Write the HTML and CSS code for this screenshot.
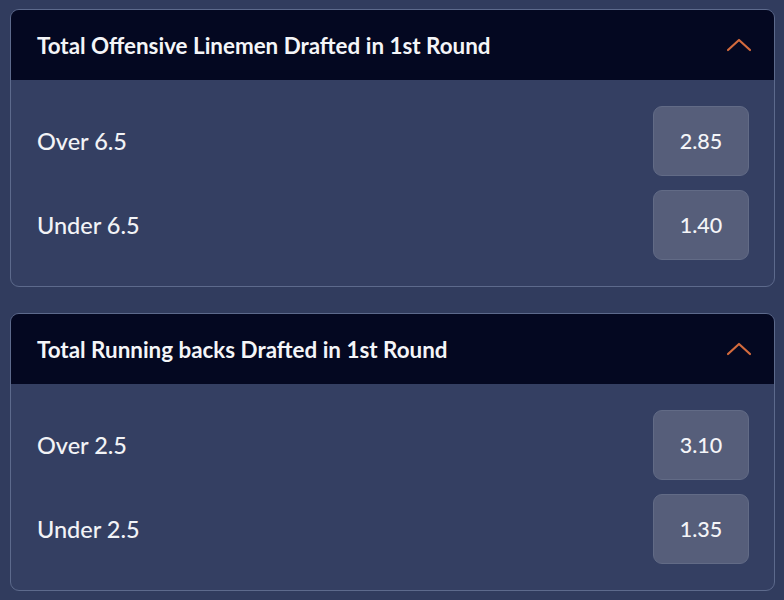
FILE: index.html
```html
<!DOCTYPE html>
<html lang="en">
  <head>
    <meta charset="UTF-8" />
    <title>Draft Props</title>
    <link rel="stylesheet" href="styles.css">
  </head>
  <body>
    <div class="market">
      <div class="market-header">
        <h2>Total Offensive Linemen Drafted in 1st Round</h2>
        <svg class="chevron" width="26" height="16" viewBox="0 0 26 16">
          <path d="M2 13 L13 3 L24 13" />
        </svg>
      </div>
      <div class="market-body">
        <div class="outcome">
          <span class="outcome-name">Over 6.5</span>
          <button class="odds">2.85</button>
        </div>
        <div class="outcome">
          <span class="outcome-name">Under 6.5</span>
          <button class="odds">1.40</button>
        </div>
      </div>
    </div>

    <div class="market">
      <div class="market-header">
        <h2>Total Running backs Drafted in 1st Round</h2>
        <svg class="chevron" width="26" height="16" viewBox="0 0 26 16">
          <path d="M2 13 L13 3 L24 13" />
        </svg>
      </div>
      <div class="market-body">
        <div class="outcome">
          <span class="outcome-name">Over 2.5</span>
          <button class="odds">3.10</button>
        </div>
        <div class="outcome">
          <span class="outcome-name">Under 2.5</span>
          <button class="odds">1.35</button>
        </div>
      </div>
    </div>
  </body>
</html>
```

FILE: styles.css
```css
body {
  margin: 0;
  padding: 9px 9px 0 10px;
  font-family: Lato, "Open Sans", sans-serif;
  background-color: #313c5e;
  color: #f2f3f6;
}
.market {
  border: 1px solid #5d6a8c;
  border-radius: 9px;
  background-color: #343f62;
  overflow: hidden;
  margin-bottom: 26px;
}
.market-header {
  display: flex;
  align-items: center;
  justify-content: space-between;
  height: 70px;
  padding: 0 22px 0 26px;
  background-color: #040821;
}
.market-header h2 {
  margin: 0;
  font-size: 22.4px;
  font-weight: 700;
  color: #f4f5f8;
}
.chevron path {
  fill: none;
  stroke: #d36a3d;
  stroke-width: 2.2;
  stroke-linecap: round;
  stroke-linejoin: round;
}
.market-body {
  display: flex;
  flex-direction: column;
  gap: 14px;
  padding: 26px 25px 26px 26px;
}
.outcome {
  display: flex;
  align-items: center;
  justify-content: space-between;
}
.outcome-name {
  font-size: 23.5px;
  font-weight: 500;
}
.odds {
  width: 96px;
  height: 70px;
  border: 1px solid #626b86;
  border-radius: 9px;
  background-color: #565e7a;
  color: #f4f5f8;
  font-family: Lato, "Open Sans", sans-serif;
  font-size: 21.5px;
  font-weight: 500;
  cursor: pointer;
}
```
